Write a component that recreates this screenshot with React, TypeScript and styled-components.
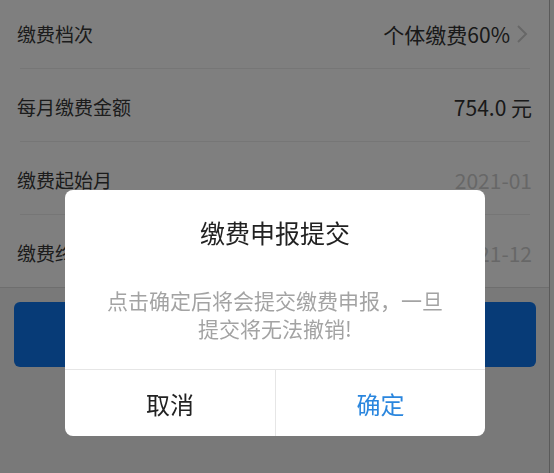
import React from 'react';
import styled, { createGlobalStyle } from 'styled-components';

const GlobalStyle = createGlobalStyle`
  html, body {
    margin: 0;
    padding: 0;
    background: #f4f4f4;
    font-family: "Noto Sans CJK SC", "Noto Sans", sans-serif;
  }
`;

const rows = [
  { label: '缴费档次', value: '个体缴费60%', arrow: true },
  { label: '每月缴费金额', value: '754.0 元' },
  { label: '缴费起始月', value: '2021-01', muted: true },
  { label: '缴费终止月', value: '2021-12', muted: true },
];

const App: React.FC = () => {
  return (
    <>
      <GlobalStyle />
      <Page>
        <List>
          {rows.map((row, i) => (
            <React.Fragment key={row.label}>
              {i > 0 && <Divider />}
              <Row>
                <Label>{row.label}</Label>
                <Value muted={!!row.muted}>
                  {row.value}
                  {row.arrow && (
                    <Chevron width="12" height="20" viewBox="0 0 12 20">
                      <polyline points="2,2 10,10 2,18" fill="none" stroke="#cfcfcf" strokeWidth="2" />
                    </Chevron>
                  )}
                </Value>
              </Row>
            </React.Fragment>
          ))}
        </List>
        <ButtonArea>
          <SubmitButton />
        </ButtonArea>
      </Page>

      <Overlay>
        <Dialog>
          <DialogTitle>缴费申报提交</DialogTitle>
          <DialogText>
            点击确定后将会提交缴费申报，一旦
            <br />
            提交将无法撤销!
          </DialogText>
          <Actions>
            <ActionButton>取消</ActionButton>
            <ActionButton primary>确定</ActionButton>
          </Actions>
        </Dialog>
      </Overlay>
    </>
  );
};

const Page = styled.div`
  width: 549px;
  height: 473px;
  background: #f2f2f2;
  border-right: 1px solid #b4b4b4;
  overflow: hidden;
`;

const List = styled.div`
  margin-top: -4px;
  background: #fff;
  border-bottom: 1px solid #dcdcdc;
`;

const Row = styled.div`
  height: 72px;
  padding: 3px 17px 0 17px;
  box-sizing: border-box;
  display: flex;
  align-items: center;
  justify-content: space-between;
`;

const Divider = styled.div`
  height: 1px;
  margin: 0 19px 0 20px;
  background: #ececec;
`;

const Label = styled.span`
  font-size: 19px;
  color: #383838;
`;

const Value = styled.span<{ muted: boolean }>`
  display: flex;
  align-items: center;
  font-size: 21px;
  color: ${(p) => (p.muted ? '#cfcfcf' : '#333')};
`;

const Chevron = styled.svg`
  margin-left: 6px;
  margin-right: 4px;
`;

const ButtonArea = styled.div`
  padding: 14px 13px 0 14px;
`;

const SubmitButton = styled.div`
  height: 65px;
  border-radius: 6px;
  background: #0f76ee;
`;

const Overlay = styled.div`
  position: fixed;
  inset: 0;
  background: rgba(0, 0, 0, 0.5);
  display: flex;
  align-items: flex-start;
  padding: 190px 0 0 65px;
`;

const Dialog = styled.div`
  width: 420px;
  background: #fff;
  border-radius: 8px;
  overflow: hidden;
  text-align: center;
`;

const DialogTitle = styled.div`
  padding-top: 25px;
  font-size: 25px;
  line-height: 34px;
  color: #222;
`;

const DialogText = styled.div`
  margin-top: 37px;
  padding: 0 20px 27px;
  font-size: 21px;
  line-height: 28px;
  color: #a3a3a3;
`;

const Actions = styled.div`
  display: grid;
  grid-template-columns: 210px 210px;
  height: 67px;
  border-top: 1px solid #e6e6e6;
  box-sizing: border-box;
`;

const ActionButton = styled.div<{ primary?: boolean }>`
  display: flex;
  align-items: center;
  justify-content: center;
  font-size: 24px;
  color: ${(p) => (p.primary ? '#2a86de' : '#222')};
  border-left: ${(p) => (p.primary ? '1px solid #e6e6e6' : 'none')};
`;

export default App;
